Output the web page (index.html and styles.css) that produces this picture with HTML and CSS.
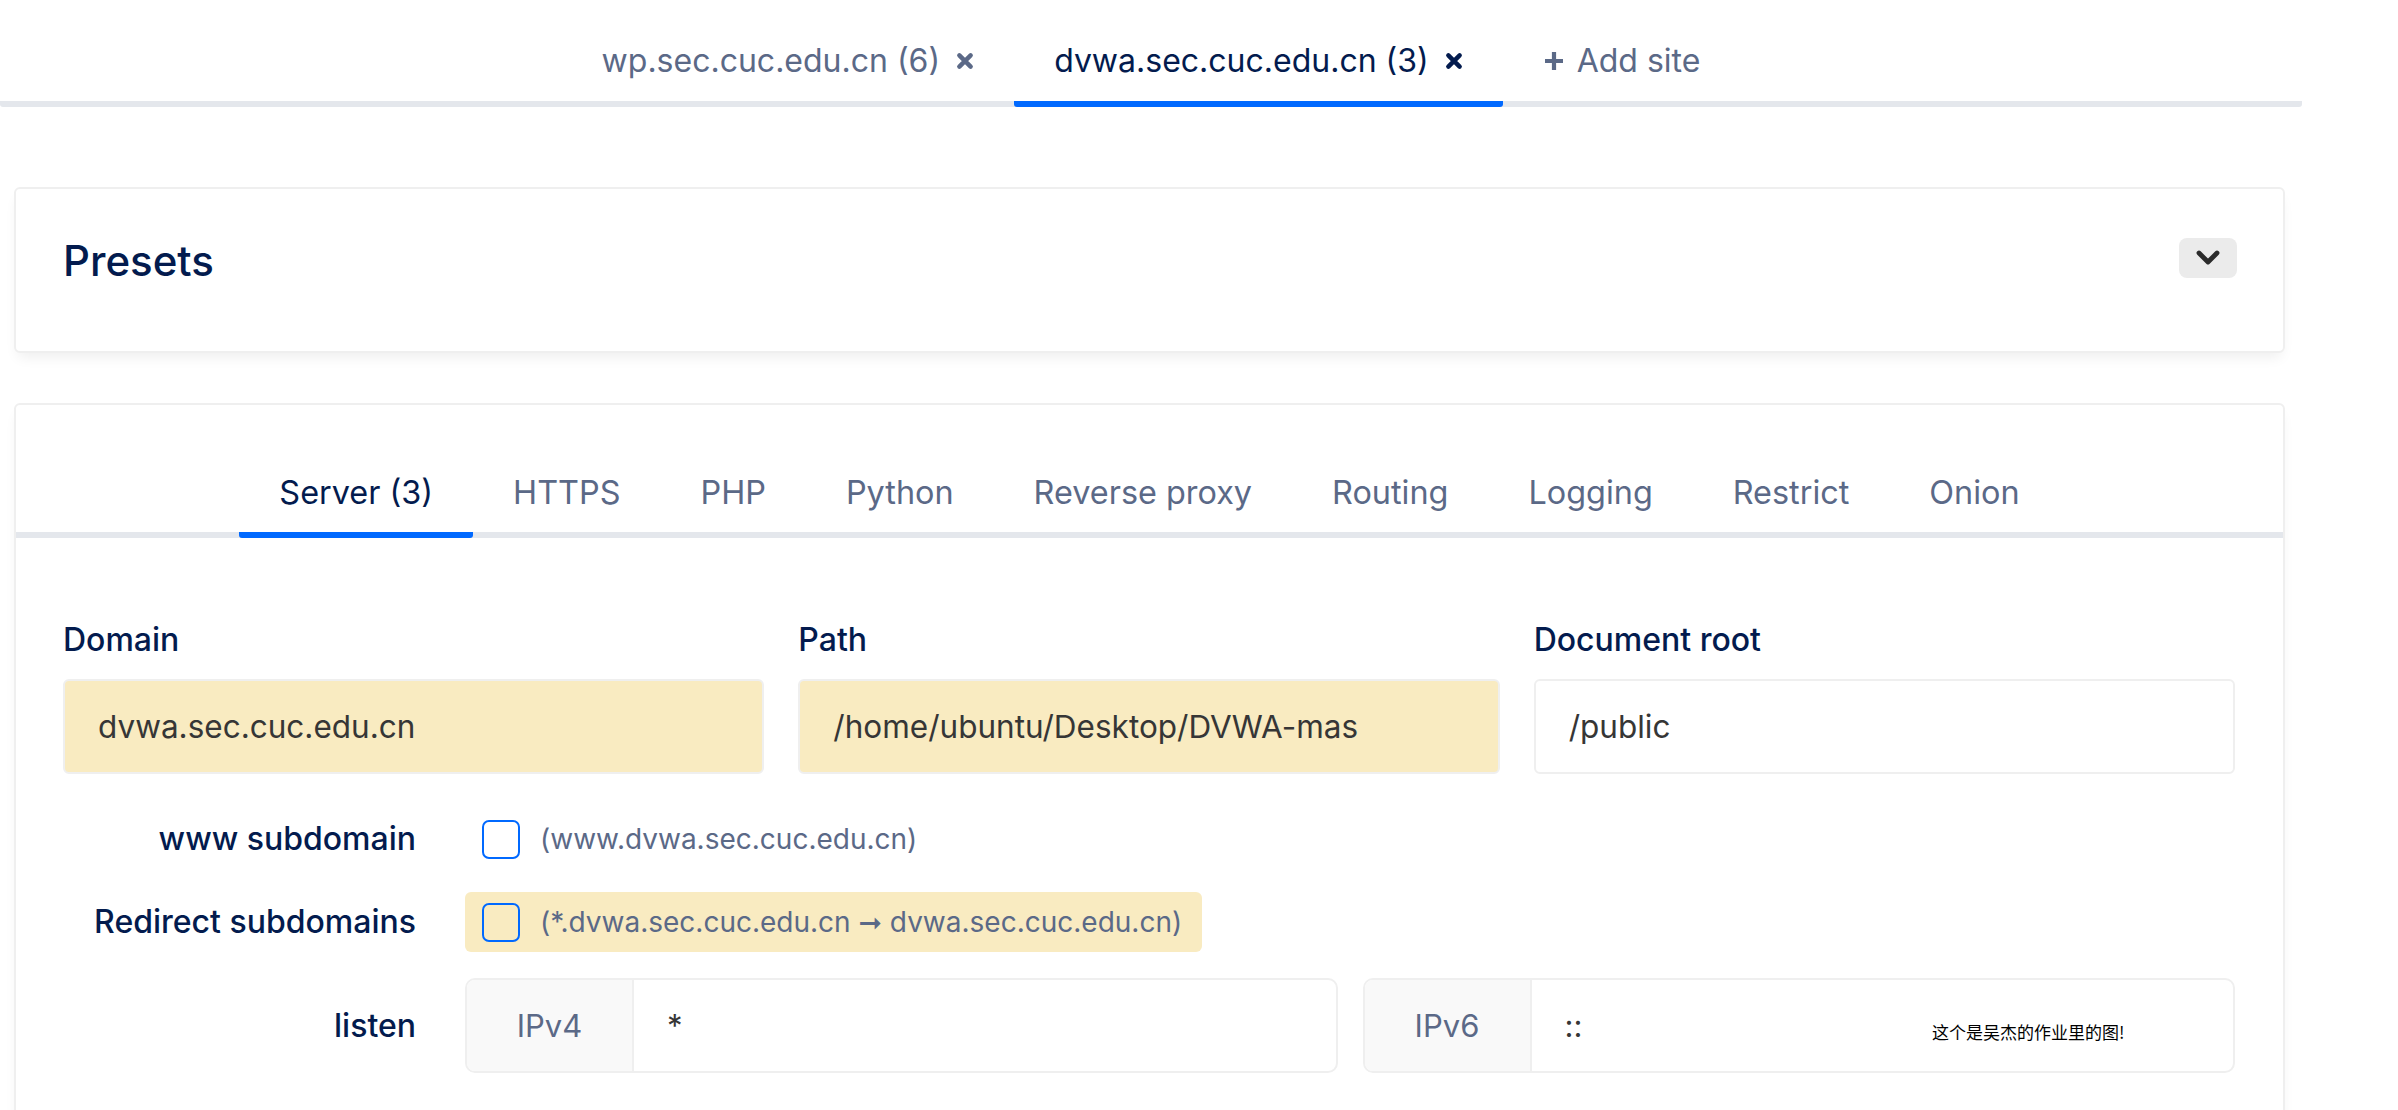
FILE: index.html
```html
<!DOCTYPE html>
<html lang="en">
<head>
<meta charset="utf-8">
<title>NGINX config</title>
<link rel="stylesheet" href="styles.css">
</head>
<body>
<div class="page">
  <nav class="site-tabs">
    <ul>
      <li class="stab"><span>wp.sec.cuc.edu.cn (6)</span><svg class="x" viewBox="0 0 16 16"><path d="M3 3 L13 13 M13 3 L3 13"/></svg></li>
      <li class="stab active"><span>dvwa.sec.cuc.edu.cn (3)</span><svg class="x" viewBox="0 0 16 16"><path d="M3 3 L13 13 M13 3 L3 13"/></svg></li>
      <li class="stab add"><svg class="plus" viewBox="0 0 22 22"><path d="M11 2 V20 M2 11 H20"/></svg><span>Add site</span></li>
    </ul>
  </nav>

  <section class="card presets">
    <h2 class="card-title">Presets</h2>
    <button class="chev" type="button"><svg viewBox="0 0 24 16"><path d="M3 3 L12 12 L21 3"/></svg></button>
  </section>

  <section class="card config">
    <nav class="inner-tabs">
      <ul>
        <li class="itab active">Server (3)</li>
        <li class="itab">HTTPS</li>
        <li class="itab">PHP</li>
        <li class="itab">Python</li>
        <li class="itab">Reverse proxy</li>
        <li class="itab">Routing</li>
        <li class="itab">Logging</li>
        <li class="itab">Restrict</li>
        <li class="itab">Onion</li>
      </ul>
    </nav>
    <div class="card-body">
      <div class="cols3">
        <div class="field">
          <label class="flabel">Domain</label>
          <div class="input warn">dvwa.sec.cuc.edu.cn</div>
        </div>
        <div class="field">
          <label class="flabel">Path</label>
          <div class="input warn">/home/ubuntu/Desktop/DVWA-mas</div>
        </div>
        <div class="field">
          <label class="flabel">Document root</label>
          <div class="input">/public</div>
        </div>
      </div>

      <div class="hrow first">
        <div class="hlabel">www subdomain</div>
        <div class="hctl">
          <div class="checkwrap"><span class="check"></span><span class="hint">(www.dvwa.sec.cuc.edu.cn)</span></div>
        </div>
      </div>

      <div class="hrow">
        <div class="hlabel">Redirect subdomains</div>
        <div class="hctl">
          <div class="checkwrap warn"><span class="check clear"></span><span class="hint">(*.dvwa.sec.cuc.edu.cn <span class="arrow">➞</span> dvwa.sec.cuc.edu.cn)</span></div>
        </div>
      </div>

      <div class="hrow listen">
        <div class="hlabel">listen</div>
        <div class="hctl groups">
          <div class="addon-group"><span class="addon">IPv4</span><span class="addon-input">*</span></div>
          <div class="addon-group"><span class="addon">IPv6</span><span class="addon-input">::</span></div>
        </div>
      </div>
    </div>
  </section>

  <div class="watermark">这个是吴杰的作业里的图!</div>
</div>
</body>
</html>
```

FILE: styles.css
```css
html, body {
  margin: 0;
  padding: 0;
  background: #ffffff;
}

body {
  font-family: Inter, "Noto Sans CJK SC", sans-serif;
  color: #031b4e;
  overflow: hidden;
}

.page {
  position: relative;
  width: 2302px;
  height: 1110px;
}

ul {
  list-style: none;
  margin: 0;
  padding: 0;
}

/* top site tabs */
.site-tabs ul {
  display: flex;
  justify-content: center;
  border-bottom: 6px solid #e4e7ec;
  border-bottom-left-radius: 3px;
  border-bottom-right-radius: 3px;
}

.stab {
  display: flex;
  align-items: center;
  gap: 16px;
  padding: 37px 40px 16px;
  font-size: 32px;
  line-height: 48px;
  color: #5b6987;
  border-bottom: 6px solid transparent;
  margin-bottom: -6px;
  border-radius: 0 0 3px 3px;
}

.stab.active {
  color: #031b4e;
  border-bottom-color: #0069ff;
}

.stab .x {
  width: 18px;
  height: 18px;
  fill: none;
  stroke: currentColor;
  stroke-width: 4;
  stroke-linecap: round;
}

.stab.add {
  gap: 12px;
}

.stab .plus {
  width: 22px;
  height: 22px;
  fill: none;
  stroke: currentColor;
  stroke-width: 4.2;
}

/* cards */
.card {
  margin: 0 17px 0 14px;
  background: #fff;
  border: 2px solid #efefef;
  border-radius: 6px;
  box-shadow: 0 8px 14px -4px rgba(10, 10, 10, 0.07);
}

.presets {
  margin-top: 80px;
  display: flex;
  align-items: center;
  justify-content: space-between;
  padding: 46px 46px 64px 47px;
  height: 52px;
}

.card-title {
  margin: 0;
  font-size: 42px;
  font-weight: 500;
  line-height: 52px;
  color: #031b4e;
}

.chev {
  width: 58px;
  height: 40px;
  border: 0;
  border-radius: 8px;
  background: #ebebeb;
  display: flex;
  align-items: center;
  justify-content: center;
  padding: 0;
  margin-bottom: 6px;
}

.chev svg {
  width: 24px;
  height: 16px;
  fill: none;
  stroke: #2b2b2b;
  stroke-width: 4.8;
  stroke-linecap: round;
  stroke-linejoin: round;
}

.config {
  margin-top: 50px;
  height: 900px;
}

/* inner tabs */
.inner-tabs ul {
  display: flex;
  justify-content: center;
  border-bottom: 6px solid #e4e7ec;
}

.itab {
  padding: 64px 40px 15px;
  font-size: 32.4px;
  line-height: 48px;
  color: #5b6987;
  border-bottom: 6px solid transparent;
  margin-bottom: -6px;
  border-radius: 3px;
}

.itab.active {
  color: #031b4e;
  border-bottom-color: #0069ff;
}

/* body */
.card-body {
  padding: 79px 48px 0 47px;
}

.cols3 {
  display: grid;
  grid-template-columns: 1fr 1fr 1fr;
  column-gap: 34px;
}

.flabel {
  display: block;
  font-size: 32px;
  line-height: 46px;
  font-weight: 500;
  color: #031b4e;
  margin-bottom: 16px;
}

.input {
  box-sizing: border-box;
  height: 95px;
  border: 2px solid #efefef;
  border-radius: 6px;
  padding: 0 33px;
  display: flex;
  align-items: center;
  font-size: 31.5px;
  color: #363636;
  background: #fff;
  white-space: nowrap;
  overflow: hidden;
}

.input.warn {
  background: #f9ebc1;
}

.hrow {
  display: flex;
  align-items: center;
  margin-top: 23px;
}

.hrow.first {
  margin-top: 35px;
}

.hrow.listen {
  margin-top: 26px;
}

.hlabel {
  width: 353px;
  flex: none;
  text-align: right;
  font-size: 32px;
  line-height: 46px;
  font-weight: 500;
  color: #031b4e;
  margin-right: 49px;
}

.hctl {
  flex: 1;
  display: flex;
}

.checkwrap {
  display: flex;
  align-items: center;
  height: 60px;
  padding: 0 20px 0 17px;
  border-radius: 6px;
  gap: 20px;
}

.checkwrap.warn {
  background: #f9ebc1;
}

.check {
  box-sizing: border-box;
  width: 38px;
  height: 39px;
  border: 2px solid #0069ff;
  border-radius: 7px;
  background: #fff;
}

.check.clear {
  background: transparent;
}

.hint {
  font-size: 28px;
  color: #5b6987;
}

.arrow {
  font-family: "DejaVu Sans", sans-serif;
  font-weight: bold;
}

.groups {
  gap: 25px;
}

.addon-group {
  flex: 1;
  display: flex;
  height: 95px;
  box-sizing: border-box;
  border: 2px solid #efefef;
  border-radius: 10px;
  overflow: hidden;
}

.addon {
  width: 165px;
  flex: none;
  display: flex;
  align-items: center;
  justify-content: center;
  background: #f9f9f9;
  border-right: 2px solid #efefef;
  font-size: 31px;
  color: #5b6987;
}

.addon-input {
  display: flex;
  align-items: center;
  padding: 0 33px;
  font-size: 31px;
  color: #363636;
}

.watermark {
  position: absolute;
  left: 1932px;
  top: 1019px;
  font-family: "Noto Sans CJK SC", sans-serif;
  font-size: 17px;
  line-height: 26px;
  color: #000;
}
```
